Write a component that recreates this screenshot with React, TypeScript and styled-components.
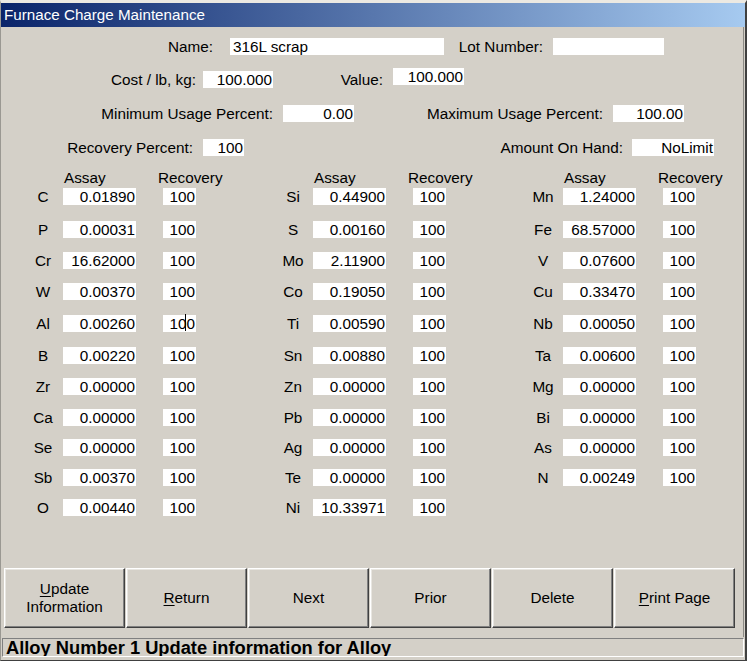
import React from "react";
import styled, { createGlobalStyle } from "styled-components";

const Global = createGlobalStyle`
  html, body { margin: 0; padding: 0; background: #d4d0c8; }
  body { font-family: "Liberation Sans", Arial, sans-serif; }
`;

const Window = styled.div`
  width: 747px;
  height: 661px;
  box-sizing: border-box;
  background: #d4d0c8;
  border-top: 3px solid #ece9e2;
  border-left: 1px solid #9a9892;
  border-right: 2px solid #404040;
  border-bottom: 1px solid #404040;
  padding-bottom: 3px;
  display: flex;
  flex-direction: column;
  font-family: "Liberation Sans", Arial, sans-serif;
  color: #000;
`;

const TitleBar = styled.div`
  height: 24px;
  flex: none;
  background: linear-gradient(to right, #0a246a, #a6caf0);
  color: #fff;
  font-size: 15.2px;
  line-height: 24px;
  padding-left: 3px;
  white-space: nowrap;
`;

const ClientArea = styled.div`
  flex: 1;
  display: flex;
  flex-direction: column;
  margin-right: 1px;
  border-right: 1px solid #8c8a85;
  margin-bottom: 1px;
`;

const FormRow = styled.div<{ $top: number; $left: number }>`
  display: flex;
  align-items: center;
  height: 17px;
  margin-top: ${(p) => p.$top}px;
  padding-left: ${(p) => p.$left}px;
`;

const FieldLabel = styled.div<{ $w: number; $gap: number }>`
  width: ${(p) => p.$w}px;
  margin-right: ${(p) => p.$gap}px;
  text-align: right;
  font-size: 15.3px;
  line-height: 17px;
  white-space: nowrap;
  flex: none;
`;

const ValueBox = styled.div<{ $w: number; $align?: "left" | "right"; $raise?: number }>`
  position: relative;
  width: ${(p) => p.$w}px;
  height: 17px;
  flex: none;
  box-sizing: border-box;
  background: #fff;
  display: flex;
  align-items: center;
  justify-content: ${(p) => (p.$align === "left" ? "flex-start" : "flex-end")};
  padding: ${(p) => (p.$align === "left" ? "0 0 0 3px" : "0 1px 0 0")};
  font-size: 15.3px;
  white-space: nowrap;
  transform: translateY(${(p) => -(p.$raise || 0)}px);
`;

const Caret = styled.span`
  position: absolute;
  left: 22px;
  top: -1px;
  width: 1px;
  height: 17px;
  background: #000;
`;

const ElementGrid = styled.div`
  display: grid;
  grid-template-columns: repeat(3, 250px);
  margin-top: 13px;
  padding-left: 22px;
`;

const GroupColumn = styled.div`
  display: flex;
  flex-direction: column;
`;

const ElementRow = styled.div<{ $h: number }>`
  display: flex;
  align-items: flex-start;
  height: ${(p) => p.$h}px;
`;

const Symbol = styled.div`
  width: 40px;
  flex: none;
  text-align: center;
  font-size: 15.3px;
  line-height: 17px;
`;

const HeaderCell = styled.div<{ $w: number; $shift: number; $gap?: number }>`
  width: ${(p) => p.$w}px;
  flex: none;
  margin-left: ${(p) => p.$gap || 0}px;
  font-size: 15.3px;
  line-height: 17px;
  white-space: nowrap;
  transform: translateX(${(p) => p.$shift}px);
`;

const RecoveryGap = styled.div`
  width: 27px;
  flex: none;
`;

const Spacer = styled.div`
  flex: 1;
`;

const ButtonBar = styled.div`
  display: flex;
  gap: 1px;
  padding-left: 3px;
  margin-bottom: 9px;
`;

const Button = styled.button`
  width: 121px;
  height: 60px;
  flex: none;
  box-sizing: border-box;
  background: #d4d0c8;
  border-top: 1px solid #ffffff;
  border-left: 1px solid #ffffff;
  border-right: 1px solid #404040;
  border-bottom: 1px solid #404040;
  box-shadow: inset -1px -1px 0 #808080, inset 1px 1px 0 #e8e6e1;
  font-family: "Liberation Sans", Arial, sans-serif;
  font-size: 15.3px;
  line-height: 18px;
  color: #000;
  padding: 0;
  text-align: center;
  u { text-decoration-thickness: 1px; text-underline-offset: 2px; }
`;

const StatusBar = styled.div`
  height: 19px;
  flex: none;
  box-sizing: border-box;
  margin: 0 1px 0 1px;
  border-top: 1px solid #808080;
  border-left: 1px solid #808080;
  border-right: 1px solid #ffffff;
  border-bottom: 1px solid #ffffff;
  font-size: 18.3px;
  font-weight: bold;
  line-height: 18px;
  padding-left: 3px;
  white-space: nowrap;
  overflow: hidden;
`;

type El = { s: string; a: string; r: string; caret?: boolean };

const col1: El[] = [
  { s: "C", a: "0.01890", r: "100" },
  { s: "P", a: "0.00031", r: "100" },
  { s: "Cr", a: "16.62000", r: "100" },
  { s: "W", a: "0.00370", r: "100" },
  { s: "Al", a: "0.00260", r: "100", caret: true },
  { s: "B", a: "0.00220", r: "100" },
  { s: "Zr", a: "0.00000", r: "100" },
  { s: "Ca", a: "0.00000", r: "100" },
  { s: "Se", a: "0.00000", r: "100" },
  { s: "Sb", a: "0.00370", r: "100" },
  { s: "O", a: "0.00440", r: "100" },
];

const col2: El[] = [
  { s: "Si", a: "0.44900", r: "100" },
  { s: "S", a: "0.00160", r: "100" },
  { s: "Mo", a: "2.11900", r: "100" },
  { s: "Co", a: "0.19050", r: "100" },
  { s: "Ti", a: "0.00590", r: "100" },
  { s: "Sn", a: "0.00880", r: "100" },
  { s: "Zn", a: "0.00000", r: "100" },
  { s: "Pb", a: "0.00000", r: "100" },
  { s: "Ag", a: "0.00000", r: "100" },
  { s: "Te", a: "0.00000", r: "100" },
  { s: "Ni", a: "10.33971", r: "100" },
];

const col3: El[] = [
  { s: "Mn", a: "1.24000", r: "100" },
  { s: "Fe", a: "68.57000", r: "100" },
  { s: "V", a: "0.07600", r: "100" },
  { s: "Cu", a: "0.33470", r: "100" },
  { s: "Nb", a: "0.00050", r: "100" },
  { s: "Ta", a: "0.00600", r: "100" },
  { s: "Mg", a: "0.00000", r: "100" },
  { s: "Bi", a: "0.00000", r: "100" },
  { s: "As", a: "0.00000", r: "100" },
  { s: "N", a: "0.00249", r: "100" },
];

const rowHeights = [33, 31, 31, 32, 32, 31, 31, 30, 30, 30, 17];

function Group({ items }: { items: El[] }) {
  return (
    <GroupColumn>
      <ElementRow $h={19}>
        <Symbol />
        <HeaderCell $w={73} $shift={1}>Assay</HeaderCell>
        <HeaderCell $w={33} $gap={27} $shift={-5}>Recovery</HeaderCell>
      </ElementRow>
      {items.map((e, i) => (
        <ElementRow key={e.s} $h={rowHeights[i]}>
          <Symbol>{e.s}</Symbol>
          <ValueBox $w={73}>{e.a}</ValueBox>
          <RecoveryGap />
          <ValueBox $w={33}>
            {e.r}
            {e.caret && <Caret />}
          </ValueBox>
        </ElementRow>
      ))}
    </GroupColumn>
  );
}

export default function App() {
  return (
    <>
      <Global />
      <Window>
        <TitleBar>Furnace Charge Maintenance</TitleBar>
        <ClientArea>
          <FormRow $top={11} $left={149}>
            <FieldLabel $w={63} $gap={17}>Name:</FieldLabel>
            <ValueBox $w={214} $align="left">316L scrap</ValueBox>
            <FieldLabel $w={99} $gap={10}>Lot Number:</FieldLabel>
            <ValueBox $w={111} $align="left" />
          </FormRow>
          <FormRow $top={16} $left={99}>
            <FieldLabel $w={96} $gap={7}>Cost / lb, kg:</FieldLabel>
            <ValueBox $w={70}>100.000</ValueBox>
            <FieldLabel $w={110} $gap={10}>Value:</FieldLabel>
            <ValueBox $w={71} $raise={3}>100.000</ValueBox>
          </FormRow>
          <FormRow $top={17} $left={89}>
            <FieldLabel $w={183} $gap={10}>Minimum Usage Percent:</FieldLabel>
            <ValueBox $w={71}>0.00</ValueBox>
            <FieldLabel $w={249} $gap={10}>Maximum Usage Percent:</FieldLabel>
            <ValueBox $w={71}>100.00</ValueBox>
          </FormRow>
          <FormRow $top={17} $left={59}>
            <FieldLabel $w={133} $gap={10}>Recovery Percent:</FieldLabel>
            <ValueBox $w={41}>100</ValueBox>
            <FieldLabel $w={379} $gap={9}>Amount On Hand:</FieldLabel>
            <ValueBox $w={82}>NoLimit</ValueBox>
          </FormRow>
          <ElementGrid>
            <Group items={col1} />
            <Group items={col2} />
            <Group items={col3} />
          </ElementGrid>
          <Spacer />
          <ButtonBar>
            <Button>
              <u>U</u>pdate
              <br />
              Information
            </Button>
            <Button>
              <u>R</u>eturn
            </Button>
            <Button>Next</Button>
            <Button>Prior</Button>
            <Button>Delete</Button>
            <Button>
              <u>P</u>rint Page
            </Button>
          </ButtonBar>
        </ClientArea>
        <StatusBar>Alloy Number 1 Update information for Alloy</StatusBar>
      </Window>
    </>
  );
}
